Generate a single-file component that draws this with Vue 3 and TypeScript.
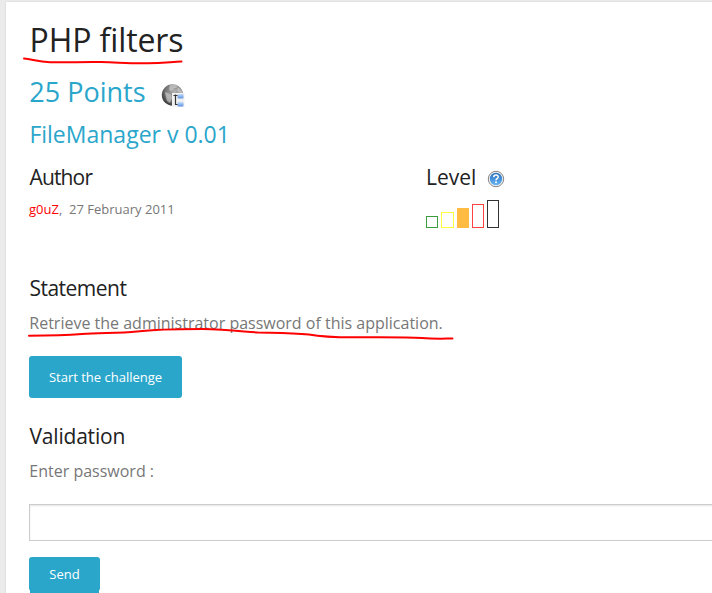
<script setup lang="ts">
interface Bar { name: string; height: number }

const bars: Bar[] = [
  { name: 'green', height: 12 },
  { name: 'yellow', height: 16 },
  { name: 'orange', height: 20 },
  { name: 'red', height: 24 },
  { name: 'black', height: 28 },
]
</script>

<template>
  <div class="page">
    <main class="panel">
      <h1 class="title">PHP filters</h1>
      <div class="points">
        <span>25 Points</span>
        <svg class="globe" width="24" height="25" viewBox="0 0 24 25">
          <defs>
            <radialGradient id="sphere" cx=".6" cy=".35" r=".7">
              <stop offset="0" stop-color="#b5b5b5" />
              <stop offset=".6" stop-color="#777" />
              <stop offset="1" stop-color="#333" />
            </radialGradient>
            <linearGradient id="node" x2="0" y2="1">
              <stop offset="0" stop-color="#c5dcfa" />
              <stop offset="1" stop-color="#5c93e4" />
            </linearGradient>
          </defs>
          <circle cx="11.5" cy="12" r="10.7" fill="url(#sphere)" />
          <path d="M9 2l5-1 3 2-2 2-2 0-1 2-3 1-1-3zM17 4l4 4 1 3-4-1-2-3zM4 9l3 1 3 2 1 3-2 5-3-2-1-4z" fill="#d0d0d0" opacity=".65" />
          <path d="M11 10h12.500v14H11z" fill="#f0f0f0" />
          <path d="M14.500 11.500v10H17M12.500 12.500H17" stroke="#333" stroke-width="1.2" fill="none" />
          <rect x="16.500" y="11" width="6" height="4.500" rx="1" fill="url(#node)" />
          <rect x="16.500" y="19" width="6" height="4.500" rx="1" fill="url(#node)" />
        </svg>
      </div>
      <h2 class="name">FileManager v 0.01</h2>

      <div class="meta">
        <section class="author">
          <h3 class="head tight">Author</h3>
          <p class="byline"><a>g0uZ</a>,&nbsp; 27 February 2011</p>
        </section>
        <section>
          <div class="level">
            <h3 class="head">Level</h3>
            <svg width="18" height="18" viewBox="0 0 18 18">
              <defs>
                <linearGradient id="help" x2="0" y2="1">
                  <stop offset="0" stop-color="#2b70be" />
                  <stop offset="1" stop-color="#65b5f7" />
                </linearGradient>
              </defs>
              <circle cx="9" cy="9" r="7.7" fill="#f4f4f4" stroke="#858585" />
              <circle cx="9" cy="9" r="6.2" fill="url(#help)" />
              <path d="M6.700 7.100C6.800 4.200 11.400 4.400 11.200 7c-.1 1.600-2.200 1.600-2.200 3.300" fill="none" stroke="#fff" stroke-width="1.5" />
              <rect x="8.100" y="11.400" width="1.800" height="1.700" fill="#fff" />
            </svg>
          </div>
          <div class="bars">
            <i v-for="bar in bars" :key="bar.name" :class="['bar', bar.name]" :style="{ height: bar.height + 'px' }"></i>
          </div>
        </section>
      </div>

      <h3 class="head statement">Statement</h3>
      <p class="text">Retrieve the administrator password of this application.</p>
      <button class="btn start">Start the challenge</button>

      <h3 class="head validation">Validation</h3>
      <p class="text">Enter password :</p>
      <input class="field" type="text" aria-label="Password">
      <button class="btn send">Send</button>
      <div class="send-edge"></div>
    </main>

    <svg class="marks" width="712" height="593" viewBox="0 0 712 593">
      <path d="M24 58.500C33 59.500 38 62 50 62.200C68 62.800 82 61.500 101 62C120 62.500 130 63.700 148 63.300C164 63 172 61.800 181.500 61.500" />
      <path d="M29 335.700C49 335.700 64 335.500 82 334C99 332.500 118 333.500 137 331.500C158 329 178 329 202 329C226 329.500 238 331 258 332.500C278 333 292 333 309 334.500C325 337.500 340 337.500 360 337.300C382 337.200 407 337 422 338C434 339 442 338.600 452.500 338.500" />
    </svg>
  </div>
</template>

<style>
body { margin: 0; overflow: hidden; }
</style>

<style scoped>
.page {
  position: relative;
  width: 712px;
  height: 593px;
  overflow: hidden;
  box-sizing: border-box;
  padding: 2px 0 0 6px;
  background: #ebebeb;
  font-family: "Open Sans", "Noto Sans", sans-serif;
}
.panel {
  box-sizing: border-box;
  height: 591px;
  padding: 18px 0 0 23px;
  background: #fff;
  box-shadow: 0 0 2px rgba(0, 0, 0, .12);
}
h1, h2, h3, p { margin: 0; font-weight: 400; white-space: nowrap; }
.title { font-size: 32px; line-height: 40px; letter-spacing: -.1px; text-indent: .5px; color: #222; }
.points {
  display: flex;
  align-items: center;
  gap: 15px;
  height: 34px;
  margin-top: 15px;
  font-size: 27px;
  line-height: 34px;
  color: #2ba6cb;
  text-indent: .3px;
}
.globe { margin-top: 7px; }
.name { margin-top: 9px; font-size: 23px; line-height: 32px; color: #2ba6cb; text-indent: .4px; }
.meta { display: flex; height: 111px; margin-top: 12px; }
.author { width: 397px; }
.head { font-size: 21px; line-height: 30px; color: #222; }
.tight { letter-spacing: -.85px; text-indent: .5px; }
.statement { letter-spacing: -.52px; text-indent: .5px; }
.validation { letter-spacing: -.2px; text-indent: .5px; }
.byline { margin-top: 8px; font-size: 13px; line-height: 18px; color: #777; }
.byline a { color: #f00; }
.level { display: flex; align-items: center; gap: 11px; height: 30px; }
.level svg { margin-top: 4px; }
.bars { display: flex; align-items: flex-end; gap: 3px; height: 28px; margin-top: 8px; }
.bar { box-sizing: border-box; width: 12.300px; border: 1px solid; }
.green { border-color: #3c9b3c; }
.yellow { border-color: #ffff42; }
.orange { border-color: #ffbb42; background: #ffbb42; }
.red { border-color: #ff4242; }
.black { border-color: #333; }
.text { margin-top: 8px; font-size: 16px; line-height: 24px; color: #777; text-indent: .3px; }
.btn {
  display: block;
  padding: 0;
  border: 0;
  border-radius: 3px;
  background: #2ba6cb;
  color: #fff;
  font-family: inherit;
  font-size: 13px;
}
.start { width: 153px; height: 42px; margin: 21px 0 23px; }
.field {
  display: block;
  box-sizing: border-box;
  width: 720px;
  height: 37px;
  margin: 21px 0 16px;
  border: 1px solid #ccc;
  border-radius: 0;
  background: #fff;
  box-shadow: inset 0 1px 2px rgba(0, 0, 0, .1);
}
.send { width: 71px; height: 34px; }
.send-edge { width: 69px; height: 4px; margin: -2px 0 0 1px; background: #2ba6cb; }
.marks { position: absolute; inset: 0; pointer-events: none; }
.marks path { fill: none; stroke: #f00; stroke-width: 2; stroke-linecap: round; }
</style>
